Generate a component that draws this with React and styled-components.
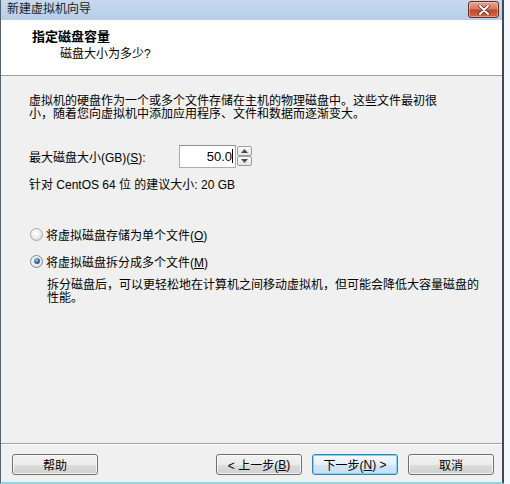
import React from "react";
import styled, { createGlobalStyle } from "styled-components";

const GlobalStyle = createGlobalStyle`
    html, body {
        margin: 0;
        padding: 0;
        background: #e4edf7;
    }
    body {
        font-family: "Liberation Sans", "Noto Sans CJK SC", sans-serif;
        font-size: 12px;
        color: #000;
    }
`;

function Radio({ checked, label }) {
    return (
        <RadioRow>
            <RadioCircle $checked={checked}>{checked && <RadioDot />}</RadioCircle>
            <span>{label}</span>
        </RadioRow>
    );
}

function App() {
    return (
        <>
            <GlobalStyle />
            <Page>
                <Window>
                    <TitleBar>
                        <TitleText>新建虚拟机向导</TitleText>
                        <CloseButton>
                            <svg width="14" height="10" viewBox="0 0 14 10">
                                <path
                                    d="M3 1 L11 9 M11 1 L3 9"
                                    stroke="#5a2418"
                                    strokeWidth="3.4"
                                    strokeLinecap="round"
                                />
                                <path
                                    d="M3 1 L11 9 M11 1 L3 9"
                                    stroke="#fff"
                                    strokeWidth="2"
                                    strokeLinecap="round"
                                />
                            </svg>
                        </CloseButton>
                    </TitleBar>
                    <Header>
                        <HeaderTitle>指定磁盘容量</HeaderTitle>
                        <HeaderSub>磁盘大小为多少?</HeaderSub>
                    </Header>
                    <Body>
                        <Paragraph>
                            虚拟机的硬盘作为一个或多个文件存储在主机的物理磁盘中。这些文件最初很
                            <br />
                            小，随着您向虚拟机中添加应用程序、文件和数据而逐渐变大。
                        </Paragraph>
                        <SizeRow>
                            <SizeLabel>
                                最大磁盘大小(GB)(<u>S</u>):
                            </SizeLabel>
                            <InputBox>
                                50.0<Caret />
                            </InputBox>
                            <Spinner>
                                <SpinButton>
                                    <svg width="7" height="4" viewBox="0 0 7 4">
                                        <path d="M0 4 L3.5 0 L7 4 Z" fill="#4d4d4d" />
                                    </svg>
                                </SpinButton>
                                <SpinButton>
                                    <svg width="7" height="4" viewBox="0 0 7 4">
                                        <path d="M0 0 L3.5 4 L7 0 Z" fill="#4d4d4d" />
                                    </svg>
                                </SpinButton>
                            </Spinner>
                        </SizeRow>
                        <Recommend>针对 CentOS 64 位 的建议大小: 20 GB</Recommend>
                        <RadioGroup>
                            <Radio
                                label={
                                    <>
                                        将虚拟磁盘存储为单个文件(<u>O</u>)
                                    </>
                                }
                            />
                            <Radio
                                checked
                                label={
                                    <>
                                        将虚拟磁盘拆分成多个文件(<u>M</u>)
                                    </>
                                }
                            />
                        </RadioGroup>
                        <Description>
                            拆分磁盘后，可以更轻松地在计算机之间移动虚拟机，但可能会降低大容量磁盘的
                            <br />
                            性能。
                        </Description>
                    </Body>
                    <Footer>
                        <Button>帮助</Button>
                        <Spacer />
                        <Button>
                            &lt; 上一步(<u>B</u>)
                        </Button>
                        <Button $primary>
                            下一步(<u>N</u>) &gt;
                        </Button>
                        <Button>取消</Button>
                    </Footer>
                </Window>
            </Page>
        </>
    );
}

const Page = styled.div`
    width: 510px;
    height: 484px;
    overflow: hidden;
    background: linear-gradient(90deg, #c9daee 0%, #f4f8fc 100%);
`;
const Window = styled.div`
    width: 501px;
    height: 482px;
    display: flex;
    flex-direction: column;
    border-left: 1px solid #54616f;
    border-right: 2px solid #3d4a57;
    border-bottom: 2px solid #8fd3e6;
    background: #f0f0f0;
`;
const TitleBar = styled.div`
    height: 20px;
    flex: none;
    display: flex;
    align-items: flex-start;
    justify-content: space-between;
    padding: 0 3px 0 6px;
    background: linear-gradient(180deg, #c6d9ef 0%, #b7cde8 100%);
`;
const TitleText = styled.span`
    line-height: 19px;
    font-size: 12px;
    color: #1b1b1b;
`;
const CloseButton = styled.div`
    width: 29px;
    height: 15px;
    margin-top: 1px;
    display: flex;
    align-items: center;
    justify-content: center;
    border: 1px solid #6b2a1d;
    border-radius: 3px;
    background: linear-gradient(180deg, #e6a594 0%, #d47a63 45%, #c1452c 55%, #cf6a4c 100%);
    box-shadow: inset 0 0 0 1px rgba(255, 255, 255, 0.35);
`;
const Header = styled.div`
    height: 56px;
    flex: none;
    background: #fff;
    border-bottom: 1px solid #a0a0a0;
    padding: 8px 0 0 31px;
    box-sizing: border-box;
`;
const HeaderTitle = styled.div`
    font-weight: bold;
    font-size: 13px;
    line-height: 17px;
`;
const HeaderSub = styled.div`
    padding-left: 28px;
    margin-top: 1px;
    line-height: 16px;
`;
const Body = styled.div`
    flex: 1;
    padding: 19px 0 0 28px;
    display: flex;
    flex-direction: column;
    align-items: flex-start;
`;
const Paragraph = styled.div`
    line-height: 13px;
`;
const SizeRow = styled.div`
    margin-top: 23px;
    display: flex;
    align-items: center;
    height: 24px;
`;
const SizeLabel = styled.span`
    width: 150px;
`;
const InputBox = styled.div`
    width: 57px;
    height: 23px;
    box-sizing: border-box;
    border: 1px solid #abadb3;
    border-top-color: #8e8f8f;
    background: #fff;
    display: flex;
    align-items: center;
    justify-content: flex-end;
    padding-right: 2px;
    font-size: 13px;
`;
const Caret = styled.span`
    width: 1px;
    height: 14px;
    background: #000;
`;
const Spinner = styled.div`
    margin-left: 1px;
    width: 15px;
    height: 20px;
    display: flex;
    flex-direction: column;
`;
const SpinButton = styled.div`
    flex: 1;
    display: flex;
    align-items: center;
    justify-content: center;
    border: 1px solid #9a9ea6;
    border-radius: 2px;
    background: linear-gradient(180deg, #fbfbfb 0%, #e4e4e4 100%);
`;
const Recommend = styled.div`
    margin-top: 11px;
    line-height: 13px;
`;
const RadioGroup = styled.div`
    margin-top: 35px;
    display: flex;
    flex-direction: column;
    gap: 13px;
`;
const RadioRow = styled.div`
    display: flex;
    align-items: center;
    gap: 3px;
    height: 14px;
    margin-left: 1px;
`;
const RadioCircle = styled.span`
    width: 11px;
    height: 11px;
    border-radius: 50%;
    border: 1px solid ${(p) => (p.$checked ? "#7d8a99" : "#a5a5a5")};
    background: radial-gradient(circle at 40% 35%, #ffffff 0%, #e8e8e8 60%, #d2d2d2 100%);
    display: flex;
    align-items: center;
    justify-content: center;
`;
const RadioDot = styled.span`
    width: 6px;
    height: 6px;
    border-radius: 50%;
    background: radial-gradient(circle at 40% 35%, #a9d2f3 0%, #3d6fa3 45%, #163c63 100%);
`;
const Description = styled.div`
    margin-top: 11px;
    padding-left: 18px;
    line-height: 13px;
`;
const Footer = styled.div`
    height: 39px;
    flex: none;
    border-top: 1px solid #a0a0a0;
    box-shadow: inset 0 1px 0 #fff;
    display: flex;
    align-items: flex-start;
    gap: 10px;
    padding: 10px 8px 0 11px;
    box-sizing: border-box;
`;
const Spacer = styled.div`
    flex: 1;
`;
const Button = styled.div`
    width: 86px;
    height: 21px;
    box-sizing: border-box;
    display: flex;
    align-items: center;
    justify-content: center;
    border: 1px solid ${(p) => (p.$primary ? "#3c7fb1" : "#707070")};
    border-radius: 3px;
    background: ${(p) =>
        p.$primary
            ? "linear-gradient(180deg, #f4f9fd 0%, #e4f0fa 50%, #d2e6f6 51%, #c8e0f4 100%)"
            : "linear-gradient(180deg, #f2f2f2 0%, #ebebeb 50%, #dddddd 51%, #cfcfcf 100%)"};
    box-shadow: inset 0 0 0 1px ${(p) => (p.$primary ? "#7ad8f7" : "rgba(255,255,255,0.7)")};
    font-size: 12px;
    color: #000;
`;

export default App;
